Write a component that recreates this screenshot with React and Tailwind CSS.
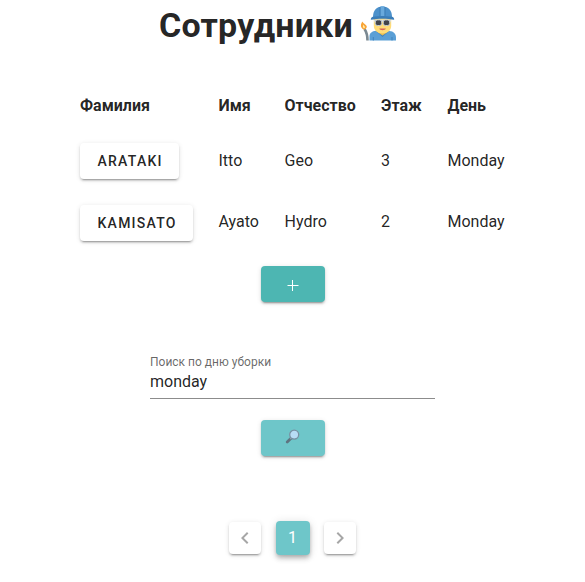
const RAISED =
  'shadow-[0_3px_1px_-2px_rgba(0,0,0,0.2),0_2px_2px_0_rgba(0,0,0,0.14),0_1px_5px_0_rgba(0,0,0,0.12)]';

const employees = [
  { surname: 'Arataki', name: 'Itto', patronymic: 'Geo', floor: 3, day: 'Monday', pad: '' },
  { surname: 'Kamisato', name: 'Ayato', patronymic: 'Hydro', floor: 2, day: 'Monday', pad: 'pb-[2px]' },
];

function WorkerIcon() {
  return (
    <svg width="37" height="37" viewBox="0 0 37 37" aria-hidden="true">
      <path d="M9.500 35.500V31c0-3 3-5 6-5h14c4 0 6.500 3 6.500 6.500v3z" fill="#5a9fd6" />
      <path d="M15.500 25.500l7 6.500 7-6.500z" fill="#3f82bd" />
      <path d="M18 24h9v3.500l-4.500 3-4.500-3z" fill="#e8bd50" />
      <path d="M13.800 13h17.400v8c0 4.500-4 7.500-8.700 7.500s-8.700-3-8.700-7.500z" fill="#ffdc78" />
      <path d="M13.300 35.500V32M32 35.500V32" stroke="#3f82bd" strokeWidth="1" />
      <path d="M19.300 23.500h6.500c-.3 2.200-6.200 2.200-6.500 0z" fill="#d5655a" />
      <path d="M14 14.700h17v2H14z" fill="#d7dde1" />
      <rect x="15.300" y="14.900" width="6.400" height="5.600" rx="2" fill="#41434a" stroke="#c3ccd2" />
      <rect x="23.300" y="14.900" width="6.400" height="5.600" rx="2" fill="#41434a" stroke="#c3ccd2" />
      <path d="M13 12.500C13 5.500 16 1.500 22.500 1.500S32 5.500 32 12.500z" fill="#4c91cb" />
      <path d="M20.500 1.200h4V11h-4z" fill="#69a9dc" />
      <path d="M20 2v9M25 2v9" stroke="#3877ad" strokeWidth=".7" />
      <path d="M10.800 14.800c0-1.700.8-2.700 2.200-3 6-1.100 13-1.100 19 0 1.400.3 2.200 1.300 2.200 3-7-1.500-16.400-1.500-23.400 0z" fill="#3b7db8" />
      <path d="M4.500 24c2 3 3 7 3 11.500" fill="none" stroke="#7b8992" strokeWidth="2.600" />
      <path d="M3.500 24.500C.3 22.500.3 19.500 2.500 16.500c.3 2 4.300 3 4.300 5.300 0 1.200-1 2.200-1.600 2.400z" fill="#f9a437" />
      <path d="M3.800 23.200c-1.300-1.200-1-2.600-.3-3.500.3 1.100 1.800 1.700 1.400 3z" fill="#ffefac" />
    </svg>
  );
}

function SearchIcon() {
  return (
    <svg width="15" height="15" viewBox="0 0 15 15" aria-hidden="true">
      <path d="M6 9.200L2.200 13" stroke="#5f7480" strokeWidth="2.800" strokeLinecap="round" />
      <path d="M6.500 8.700L5.200 10" stroke="#91a4ae" strokeWidth="1.500" />
      <circle cx="9.200" cy="5.600" r="4.500" fill="#b8dcf5" stroke="#7890a2" strokeWidth="1.300" />
    </svg>
  );
}

function Chevron({ d }) {
  return (
    <svg width="24" height="24" viewBox="0 0 24 24" fill="#000" fillOpacity="0.35" aria-hidden="true">
      <path d={d} />
    </svg>
  );
}

export default function App() {
  return (
    <main className="flex h-[582px] w-[585px] flex-col overflow-hidden bg-white font-['Roboto',sans-serif] text-base leading-6 text-black/87">
      <h1 className="ml-[159px] flex h-[50px] items-center text-[34px] font-bold leading-[50px]">
        <span className="w-[201px] tracking-[0.25px]">Сотрудники</span>
        <span className="-mt-[3px]"><WorkerIcon /></span>
      </h1>

      <table className="ml-[80px] mt-[30px] w-[450px] table-fixed border-collapse text-left">
        <colgroup>
          <col className="w-[138.5px]" />
          <col className="w-[66px]" />
          <col className="w-[96.5px]" />
          <col className="w-[66.5px]" />
          <col />
        </colgroup>
        <thead>
          <tr className="h-[50px]">
            <th className="p-0 pt-[2px] font-bold">Фамилия</th>
            <th className="p-0 pt-[2px] font-bold">Имя</th>
            <th className="p-0 pt-[2px] font-bold">Отчество</th>
            <th className="p-0 pt-[2px] font-bold">Этаж</th>
            <th className="p-0 pt-[2px] font-bold">День</th>
          </tr>
        </thead>
        <tbody>
          {employees.map((e) => (
            <tr key={e.surname} className="h-[62px]">
              <td className="p-0">
                <button className={`flex h-9 items-center rounded bg-white pl-[17.5px] pr-4 text-sm font-medium uppercase tracking-[0.0892857em] ${RAISED}`}>
                  {e.surname}
                </button>
              </td>
              <td className={e.pad}>{e.name}</td>
              <td className={e.pad}>{e.patronymic}</td>
              <td className={e.pad}>{e.floor}</td>
              <td className={e.pad}>{e.day}</td>
            </tr>
          ))}
        </tbody>
      </table>

      <button className={`ml-[261px] mt-[12px] flex h-9 w-16 shrink-0 items-center justify-center rounded bg-[#4db6b2] ${RAISED}`}>
        <svg width="12" height="12" viewBox="0 0 12 12" stroke="#fff" strokeWidth="1" className="mt-[3px]" aria-hidden="true">
          <path d="M.5 5.500h11M5.500 0v11" />
        </svg>
      </button>

      <label className="ml-[150px] mt-[52px] flex h-[45px] w-[285px] flex-col border-b border-[#8c8c8c]">
        <span className="h-4 text-xs leading-4 text-black/60">Поиск по дню уборки</span>
        <input className="h-6 w-full p-0 text-base leading-6 outline-none" defaultValue="monday" />
      </label>

      <button className={`ml-[261px] mt-[21px] flex h-9 w-16 shrink-0 items-center justify-center rounded bg-[#6ec6c9] pb-[3px] pr-[2px] ${RAISED}`}>
        <SearchIcon />
      </button>

      <nav className="ml-[229px] mt-[65px] flex h-[34px] items-center">
        <button className={`flex size-8 items-center justify-center rounded bg-white ${RAISED}`}>
          <Chevron d="M15.41 16.58L10.83 12l4.58-4.59L14 6l-6 6 6 6z" />
        </button>
        <button className="ml-[15px] mr-[14px] flex size-[34px] items-center justify-center rounded bg-[#6ec6c9] pr-px text-white shadow-[0_2px_4px_-1px_rgba(0,0,0,0.2),0_4px_5px_0_rgba(0,0,0,0.14),0_1px_10px_0_rgba(0,0,0,0.12)]">
          1
        </button>
        <button className={`flex size-8 items-center justify-center rounded bg-white ${RAISED}`}>
          <Chevron d="M8.59 16.58L13.17 12 8.59 7.41 10 6l6 6-6 6z" />
        </button>
      </nav>
    </main>
  );
}
